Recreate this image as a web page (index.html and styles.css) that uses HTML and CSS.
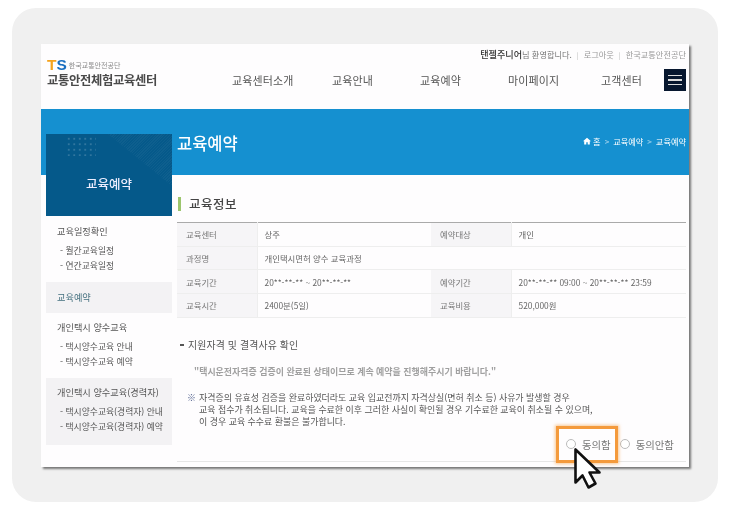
FILE: index.html
```html
<!DOCTYPE html>
<html lang="ko">
  <head>
    <meta charset="UTF-8" />
    <meta name="viewport" content="width=device-width, initial-scale=1.0" />
    <title>교통안전체험교육센터</title>
    <link rel="stylesheet" href="styles.css">
  </head>

  <body>
    <div class="card">
      <div class="window">
        <header class="header">
          <div class="logo">
            <p class="logo-top"><span class="ts"><b class="ts-t">T</b><b class="ts-s">S</b></span><small>한국교통안전공단</small></p>
            <p class="logo-name">교통안전체험교육센터</p>
          </div>
          <div class="header-right">
            <p class="util"><b>탠젤주니어</b>님 환영합니다.<i>|</i><span>로그아웃</span><i>|</i><span>한국교통안전공단</span></p>
            <div class="nav-row">
              <nav class="menu">
                <a href="#">교육센터소개</a>
                <a href="#">교육안내</a>
                <a href="#">교육예약</a>
                <a href="#">마이페이지</a>
                <a href="#">고객센터</a>
              </nav>
              <button class="burger" aria-label="menu"><span></span><span></span><span></span></button>
            </div>
          </div>
        </header>

        <section class="banner">
          <h1>교육예약</h1>
          <p class="crumbs">
            <svg width="8" height="8" viewBox="0 0 10 10"><path d="M5 .8 0 5.4h1.5V9.5h2.6V6.5h1.8v3h2.6V5.4H10z" fill="#fff"/></svg>
            홈<i>&gt;</i>교육예약<i>&gt;</i>교육예약
          </p>
        </section>

        <div class="layout">
          <aside class="side">
            <div class="side-title">
              <span class="dots"></span>
              <span class="hatch"></span>
              <h2>교육예약</h2>
            </div>
            <div class="side-group">
              <p class="side-head">교육일정확인</p>
              <a href="#">- 월간교육일정</a>
              <a href="#">- 연간교육일정</a>
            </div>
            <div class="side-band"><a href="#">교육예약</a></div>
            <div class="side-group side-group-mid">
              <p class="side-head">개인택시 양수교육</p>
              <a href="#">- 택시양수교육 안내</a>
              <a href="#">- 택시양수교육 예약</a>
            </div>
            <div class="side-group side-group-on">
              <p class="side-head">개인택시 양수교육(경력자)</p>
              <a href="#">- 택시양수교육(경력자) 안내</a>
              <a href="#">- 택시양수교육(경력자) 예약</a>
            </div>
          </aside>

          <main class="content">
            <h3 class="section-title">교육정보</h3>
            <table class="info">
              <colgroup>
                <col class="col-label" /><col class="col-value" /><col class="col-label" /><col />
              </colgroup>
              <tr>
                <th>교육센터</th><td>상주</td>
                <th>예약대상</th><td>개인</td>
              </tr>
              <tr>
                <th>과정명</th><td colspan="3">개인택시면허 양수 교육과정</td>
              </tr>
              <tr>
                <th>교육기간</th><td>20**-**-** ~ 20**-**-**</td>
                <th>예약기간</th><td>20**-**-** 09:00 ~ 20**-**-** 23:59</td>
              </tr>
              <tr>
                <th>교육시간</th><td>2400분(5일)</td>
                <th>교육비용</th><td>520,000원</td>
              </tr>
            </table>

            <p class="sub-title"><span class="dash"></span>지원자격 및 결격사유 확인</p>
            <p class="quote">"택시운전자격증 검증이 완료된 상태이므로 계속 예약을 진행해주시기 바랍니다."</p>
            <div class="note">
              <span class="note-mark">※</span>
              <p>자격증의 유효성 검증을 완료하였더라도 교육 입교전까지 자격상실(면허 취소 등) 사유가 발생할 경우<br />
              교육 접수가 취소됩니다. 교육을 수료한 이후 그러한 사실이 확인될 경우 기수료한 교육이 취소될 수 있으며,<br />
              이 경우 교육 수수료 환불은 불가합니다.</p>
            </div>

            <div class="agree">
              <label><span class="radio"></span>동의함</label>
              <label><span class="radio"></span>동의안함</label>
              <span class="mark"></span>
              <svg class="cursor" width="30" height="44" viewBox="0 0 30 44">
                <path d="M2.5 2.5V35.500L9.500 28.500L15.500 40.500L22.500 36.500L16.500 25.500H26.500Z" fill="#fff" stroke="#111" stroke-width="2.600" stroke-linejoin="round"/>
              </svg>
            </div>
          </main>
        </div>
      </div>
    </div>
  </body>
</html>
```

FILE: styles.css
```css
/* reset */
html {
  box-sizing: border-box;
  font-family: "Noto Sans CJK KR", "Noto Sans", sans-serif;
  font-size: 16px;
}

*,
*:before,
*:after {
  box-sizing: inherit;
}

body {
  margin: 0;
  padding: 8px 13px 11px 12px;
  background-color: #fff;
  color: #555;
}

p,
h1,
h2,
h3 {
  margin: 0;
  font-weight: 400;
}

a {
  color: inherit;
  text-decoration: none;
}

/* grey rounded card round the capture */
.card {
  height: 494px;
  padding: 36px 29px 0;
  background-color: #f0f0f0;
  border-radius: 24px;
}

.window {
  height: 423px;
  background-color: #fefdfe;
  box-shadow: 2px 2px 2px #777;
  filter: blur(0.4px);
}

/* header */
.header {
  height: 65px;
  display: flex;
  padding: 0 3px 0 6px;
}

.logo {
  width: 185px;
  padding-top: 15px;
}

.logo-top {
  display: flex;
  align-items: center;
  gap: 2px;
  height: 12px;
}

.ts {
  font-family: "Liberation Sans", sans-serif;
  font-size: 15.500px;
  line-height: 12px;
}

.ts-t {
  color: #f5a31d;
}

.ts-s {
  color: #1a6fc0;
}

.logo-top small {
  font-size: 7px;
  color: #888;
}

.logo-name {
  font-size: 12.300px;
  line-height: 18px;
  font-weight: 700;
  color: #4a4a4a;
  letter-spacing: -0.300px;
}

.header-right {
  flex-grow: 1;
}

.util {
  height: 20px;
  padding-top: 3px;
  font-size: 8.200px;
  line-height: 14px;
  text-align: right;
  color: #777;
}

.util b {
  font-size: 9.100px;
  font-weight: 500;
  color: #333;
}

.util i {
  margin: 0 5px;
  font-style: normal;
  font-size: 7px;
  color: #bbb;
}

.util span {
  color: #999;
}

.nav-row {
  display: flex;
  align-items: center;
  justify-content: space-between;
  margin-top: 5px;
}

.menu {
  display: grid;
  grid-template-columns: 100px 88px 88px 93px auto;
  font-size: 11px;
  letter-spacing: 0.150px;
  color: #555;
}

.burger {
  width: 22px;
  height: 22px;
  padding: 0 4px;
  border: 0;
  background-color: #07172f;
  display: flex;
  flex-direction: column;
  justify-content: center;
  gap: 3px;
}

.burger span {
  display: block;
  height: 1.500px;
  background-color: #ddd;
}

/* blue band */
.banner {
  height: 66px;
  padding: 21px 3px 0 136px;
  display: flex;
  justify-content: space-between;
  background-color: #1590d0;
  color: #fff;
}

.banner h1 {
  font-size: 16.500px;
  line-height: 26px;
  font-weight: 500;
}

.crumbs {
  font-size: 8.200px;
  line-height: 22px;
}

.crumbs i {
  margin: 0 4px;
  font-style: normal;
  opacity: 0.6;
}

/* sidebar + content */
.layout {
  display: flex;
  gap: 5px;
  margin-top: -41px;
  padding: 0 3px 0 5px;
}

.side {
  width: 126px;
  flex-shrink: 0;
  font-size: 9.200px;
  color: #555;
}

.side-title {
  position: relative;
  height: 82px;
  padding-top: 39px;
  background-color: #05598a;
  text-align: center;
  overflow: hidden;
}

.side-title h2 {
  font-size: 12.500px;
  line-height: 22px;
  font-weight: 500;
  color: #eef;
}

.dots {
  position: absolute;
  left: 20px;
  top: 2px;
  width: 30px;
  height: 20px;
  background-image: radial-gradient(circle, rgba(255, 255, 255, 0.2) 0.6px, transparent 1px);
  background-size: 5.500px 5.500px;
}

.hatch {
  position: absolute;
  right: 0;
  top: 0;
  width: 64px;
  height: 52px;
  clip-path: polygon(0 0, 100% 0, 100% 100%);
  background-image: repeating-linear-gradient(135deg, rgba(255, 255, 255, 0.035) 0 1px, transparent 1px 2px);
}

.side-group {
  padding: 7px 0 9px 11px;
}

.side-group a {
  display: block;
  padding-left: 3px;
  font-size: 8.800px;
  line-height: 15px;
}

.side-head {
  line-height: 16px;
  margin-bottom: 4px;
}

.side-group-mid {
  height: 65px;
  padding-top: 6px;
}

.side-group-on {
  height: 67px;
  padding-top: 6px;
  background-color: #f3f2f4;
}

.side-band {
  height: 31px;
  padding-left: 11px;
  background-color: #f3f2f4;
  line-height: 30px;
  color: #44707f;
}

.content {
  flex-grow: 1;
  min-width: 0;
  padding-top: 41px;
}

.section-title {
  height: 47px;
  padding: 19px 0 0 12px;
  position: relative;
  font-size: 12.500px;
  line-height: 20px;
  letter-spacing: 0.500px;
  font-weight: 500;
  color: #444;
}

.section-title:before {
  content: "";
  position: absolute;
  left: 1px;
  top: 22px;
  width: 3px;
  height: 14px;
  background-color: #9cc56d;
}

/* info table */
.info {
  width: 100%;
  table-layout: fixed;
  border-collapse: collapse;
  border-top: 1px solid #aaa;
  font-size: 8.400px;
  color: #666;
}

.col-label {
  width: 80px;
}

.col-value {
  width: 174px;
}

.info th,
.info td {
  height: 23.700px;
  padding: 0 0 0 7px;
  border-bottom: 1px solid #eee;
  text-align: left;
  font-weight: 400;
  white-space: nowrap;
}

.info th {
  padding-left: 9px;
  background-color: #f6f5f7;
  border-right: 1px solid #eee;
  color: #777;
}

.sub-title {
  margin-top: 17px;
  display: flex;
  align-items: center;
  font-size: 9.900px;
  line-height: 20px;
  letter-spacing: 0.150px;
  color: #555;
  padding-left: 3px;
}

.dash {
  width: 4px;
  height: 1.500px;
  margin-right: 4px;
  background-color: #555;
}

.quote {
  margin-top: 10px;
  padding-left: 17px;
  font-size: 8.950px;
  line-height: 14px;
  font-weight: 700;
  color: #a0a0a0;
  white-space: nowrap;
}

.note {
  display: flex;
  margin-top: 13px;
  padding-left: 10px;
  font-size: 8.950px;
  line-height: 12px;
  color: #555;
  white-space: nowrap;
}

.note-mark {
  width: 12px;
  color: #55648f;
}

.agree {
  position: relative;
  height: 34px;
  padding-left: 389px;
  display: flex;
  gap: 9px;
  align-items: center;
  border-bottom: 1px solid #e6e6e6;
  font-size: 10.400px;
  color: #777;
}

.agree label {
  display: flex;
  align-items: center;
  gap: 6px;
}

.radio {
  width: 10px;
  height: 10px;
  border: 1px solid #bbb;
  border-radius: 50%;
  background-color: #fff;
}

/* annotation over the radio */
.mark {
  position: absolute;
  left: 379px;
  top: -2px;
  width: 62px;
  height: 37px;
  border: 3px solid #f49a3c;
  box-shadow: 0 0 3px 1px rgba(244, 154, 60, 0.55);
}

.cursor {
  position: absolute;
  left: 396px;
  top: 19px;
}
```
